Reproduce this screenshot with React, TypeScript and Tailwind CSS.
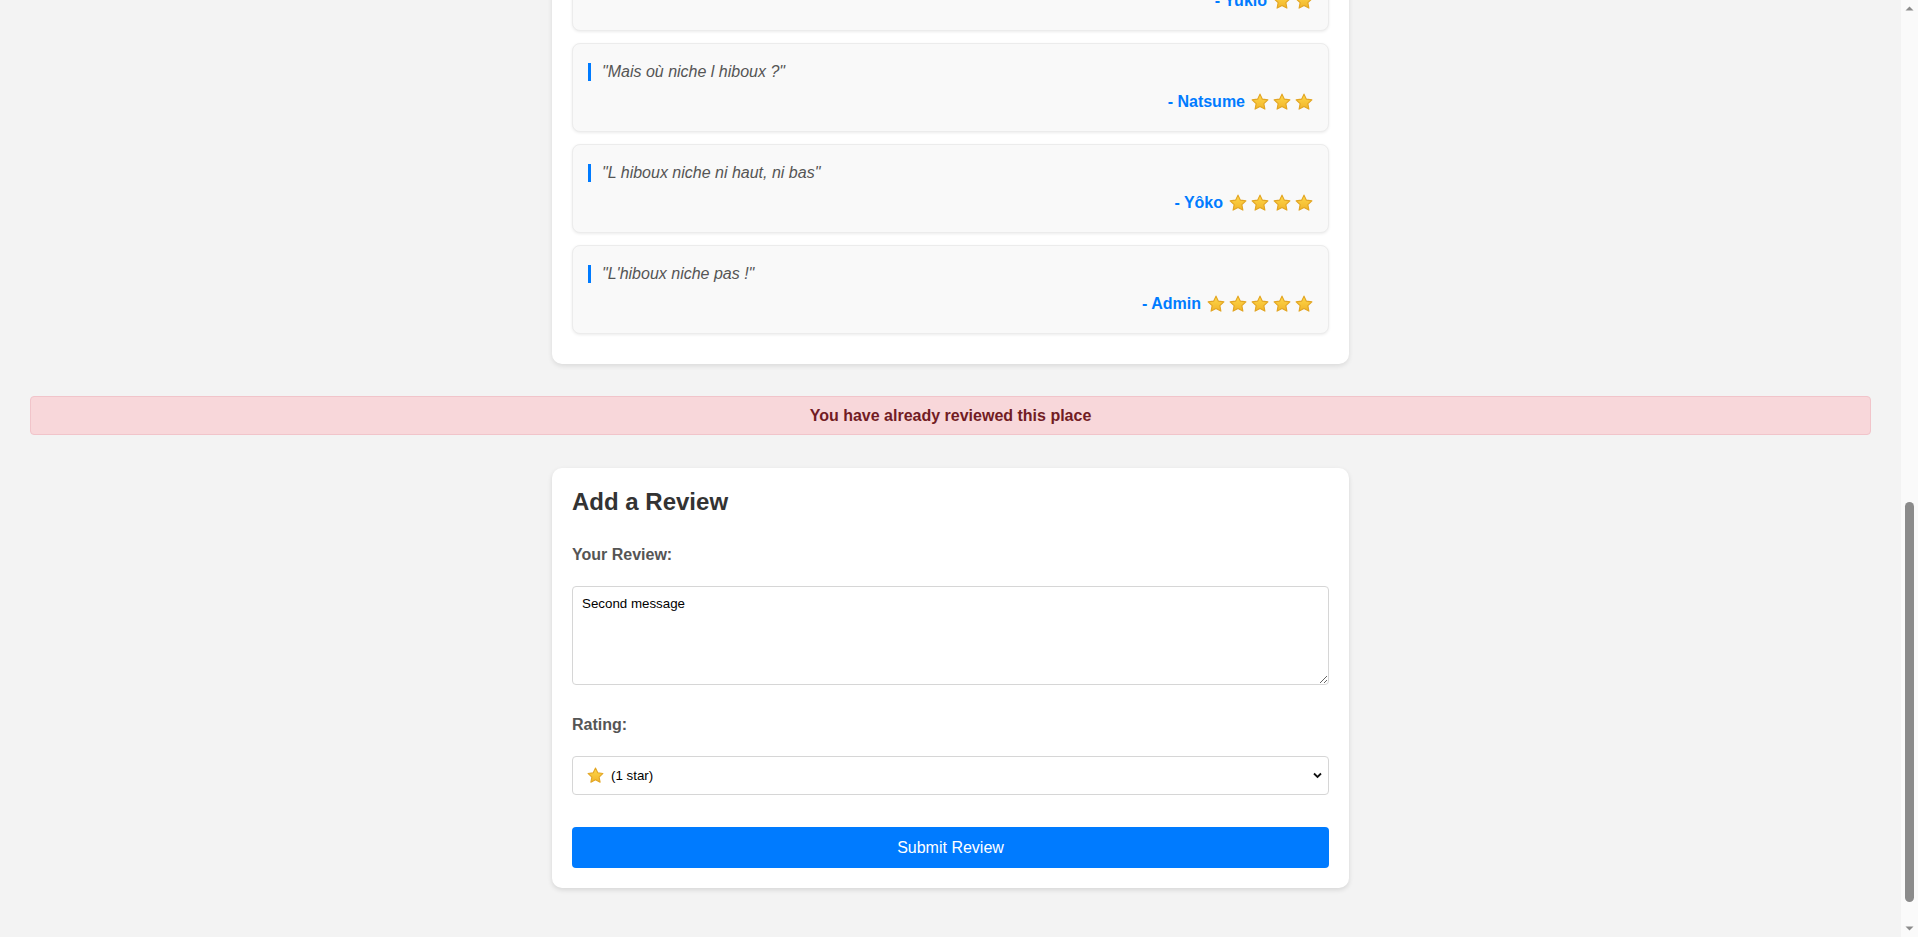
import { useLayoutEffect, useRef } from "react"

const reviews = [
  { text: "\"Qui c'est qui niche l hiboux ?\"", author: "Hikari", rating: 1 },
  { text: "\"Où niche l hiboux ?\"", author: "Yukio", rating: 2 },
  { text: "\"Mais où niche l hiboux ?\"", author: "Natsume", rating: 3 },
  { text: "\"L hiboux niche ni haut, ni bas\"", author: "Yôko", rating: 4 },
  { text: "\"L'hiboux niche pas !\"", author: "Admin", rating: 5 },
]

const amenities = ["Wi-Fi", "Air conditioning", "Kitchen", "Free parking", "Washing machine"]

function Star({ size = 18 }: { size?: number }) {
  return (
    <svg width={size} height={size} viewBox="1.5 1.5 21 21" aria-hidden="true">
      <defs>
        <linearGradient id="starFill" x1="0" y1="0" x2="0" y2="1">
          <stop offset="0%" stopColor="#ffd84a" />
          <stop offset="100%" stopColor="#f1b52a" />
        </linearGradient>
      </defs>
      <path
        d="M12 2.8l2.8 5.9 6.4.8-4.7 4.4 1.2 6.4L12 17.2l-5.7 3.1 1.2-6.4-4.7-4.4 6.4-.8z"
        fill="url(#starFill)"
        stroke="#e2a523"
        strokeWidth="1.3"
        strokeLinejoin="round"
      />
    </svg>
  )
}

function ReviewCard({ text, author, rating }: { text: string; author: string; rating: number }) {
  return (
    <div className="h-[89px] rounded-[8px] border border-[#ececec] bg-[#f9f9f9] px-[15px] pt-[19px] shadow-[0_1px_3px_rgba(0,0,0,0.08)]">
      <p className="border-l-[3px] border-[#007bff] pl-[11px] text-[16px] leading-[18px] italic text-[#555]">
        {text}
      </p>
      <div className="mt-[10px] flex h-[22px] items-center justify-end">
        <span className="text-[16px] font-bold text-[#007bff]">- {author}</span>
        <span className="ml-[6px] flex gap-[4px]">
          {Array.from({ length: rating }).map((_, i) => (
            <Star key={i} />
          ))}
        </span>
      </div>
    </div>
  )
}

// window scrollbar as it shows in the capture (headless hides the real one)
function Scrollbar() {
  return (
    <aside className="flex h-screen w-[17px] shrink-0 flex-col bg-[#fafafa]">
      <div className="flex h-[17px] items-center justify-center">
        <svg width="9" height="5" viewBox="0 0 9 5" aria-hidden="true">
          <path d="M0.5 4.5L4.5 0.5 8.5 4.5z" fill="#8b8b8b" />
        </svg>
      </div>
      <div className="flex flex-1 flex-col justify-end pb-[18px]">
        <div className="mx-auto h-[400px] w-[9px] rounded-full bg-[#8b8b8b]" />
      </div>
      <div className="flex h-[17px] items-center justify-center">
        <svg width="9" height="5" viewBox="0 0 9 5" aria-hidden="true">
          <path d="M0.5 0.5L4.5 4.5 8.5 0.5z" fill="#8b8b8b" />
        </svg>
      </div>
    </aside>
  )
}

export default function App() {
  const scroller = useRef<HTMLDivElement>(null)

  useLayoutEffect(() => {
    if (scroller.current) {
      scroller.current.scrollTop = scroller.current.scrollHeight
    }
  }, [])

  return (
    <div className="flex h-screen bg-[#f3f3f3] font-['Liberation_Sans',Arial,sans-serif] text-[#333]">
      <div ref={scroller} className="h-screen min-w-0 flex-1 overflow-hidden">
        <header className="flex h-[70px] items-center justify-between border-b border-[#ddd] bg-white px-[30px]">
          <span className="text-[24px] font-bold text-[#007bff]">HBnB</span>
          <span className="rounded-[4px] bg-[#007bff] px-[16px] py-[8px] text-[16px] text-white">Logout</span>
        </header>

        <main className="pt-[30px] pb-[49px]">
          <section className="mx-auto w-[797px] rounded-[10px] bg-white p-[20px] shadow-[0_2px_5px_rgba(0,0,0,0.1)]">
            <h1 className="mb-[16px] text-[28px] font-bold">Cozy loft near the old port</h1>
            <p className="mb-[8px] text-[16px] text-[#555]">
              <span className="font-bold">Host:</span> Admin
            </p>
            <p className="mb-[8px] text-[16px] text-[#555]">
              <span className="font-bold">Price per night:</span> $85
            </p>
            <p className="mb-[16px] text-[16px] leading-[24px] text-[#555]">
              A quiet and bright place in the heart of the city, close to shops, restaurants and public transport.
              Perfect for couples and travellers who want to explore on foot.
            </p>
            <h3 className="mb-[10px] text-[18px] font-bold">Amenities</h3>
            <ul className="flex flex-col gap-[8px] pl-[20px] text-[16px] text-[#555]">
              {amenities.map((a) => (
                <li key={a} className="list-disc">
                  {a}
                </li>
              ))}
            </ul>
          </section>

          <section className="mx-auto mt-[30px] w-[797px] rounded-[10px] bg-white px-[20px] pt-[20px] pb-[30px] shadow-[0_2px_5px_rgba(0,0,0,0.1)]">
            <h2 className="mb-[20px] text-[24px] leading-[28px] font-bold">Reviews</h2>
            <div className="flex flex-col gap-[12px]">
              {reviews.map((r) => (
                <ReviewCard key={r.author} {...r} />
              ))}
            </div>
          </section>

          <div className="mx-[30px] mt-[32px] rounded-[4px] border border-[#f1c4ca] bg-[#f8d7da] py-[9px] text-center text-[16px] leading-[19px] font-bold text-[#721c24]">
            You have already reviewed this place
          </div>

          <section className="mx-auto mt-[33px] w-[797px] rounded-[10px] bg-white p-[20px] shadow-[0_2px_5px_rgba(0,0,0,0.12)]">
            <h2 className="mb-[30px] text-[24px] leading-[28px] font-bold text-[#333]">Add a Review</h2>
            <form className="flex flex-col" onSubmit={(e) => e.preventDefault()}>
              <label htmlFor="review" className="mb-[22px] block text-[16px] leading-[18px] font-bold text-[#555]">
                Your Review:
              </label>
              <textarea
                id="review"
                defaultValue="Second message"
                className="mb-[31px] block h-[99px] w-full rounded-[4px] border border-[#d6d6d6] bg-white p-[9px] text-[13.33px] leading-[15px] text-black"
              />
              <label htmlFor="rating" className="mb-[22px] block text-[16px] leading-[18px] font-bold text-[#555]">
                Rating:
              </label>
              <div className="relative mb-[32px] h-[39px]">
                <select
                  id="rating"
                  defaultValue="1"
                  className="h-[39px] w-full appearance-none rounded-[4px] border border-[#d6d6d6] bg-white pl-[38px] text-[13.33px] text-black"
                >
                  <option value="1">(1 star)</option>
                  <option value="2">(2 stars)</option>
                  <option value="3">(3 stars)</option>
                  <option value="4">(4 stars)</option>
                  <option value="5">(5 stars)</option>
                </select>
                <span className="pointer-events-none absolute top-[11px] left-[15px]">
                  <Star size={17} />
                </span>
                <svg
                  className="pointer-events-none absolute top-[16px] right-[7px]"
                  width="9"
                  height="7"
                  viewBox="0 0 9 7"
                  aria-hidden="true"
                >
                  <path d="M1 1.5l3.5 3.5L8 1.5" fill="none" stroke="#111" strokeWidth="1.8" />
                </svg>
              </div>
              <button
                type="submit"
                className="h-[41px] w-full rounded-[4px] bg-[#007bff] text-[16px] text-white"
              >
                Submit Review
              </button>
            </form>
          </section>
        </main>
      </div>
      <Scrollbar />
    </div>
  )
}
